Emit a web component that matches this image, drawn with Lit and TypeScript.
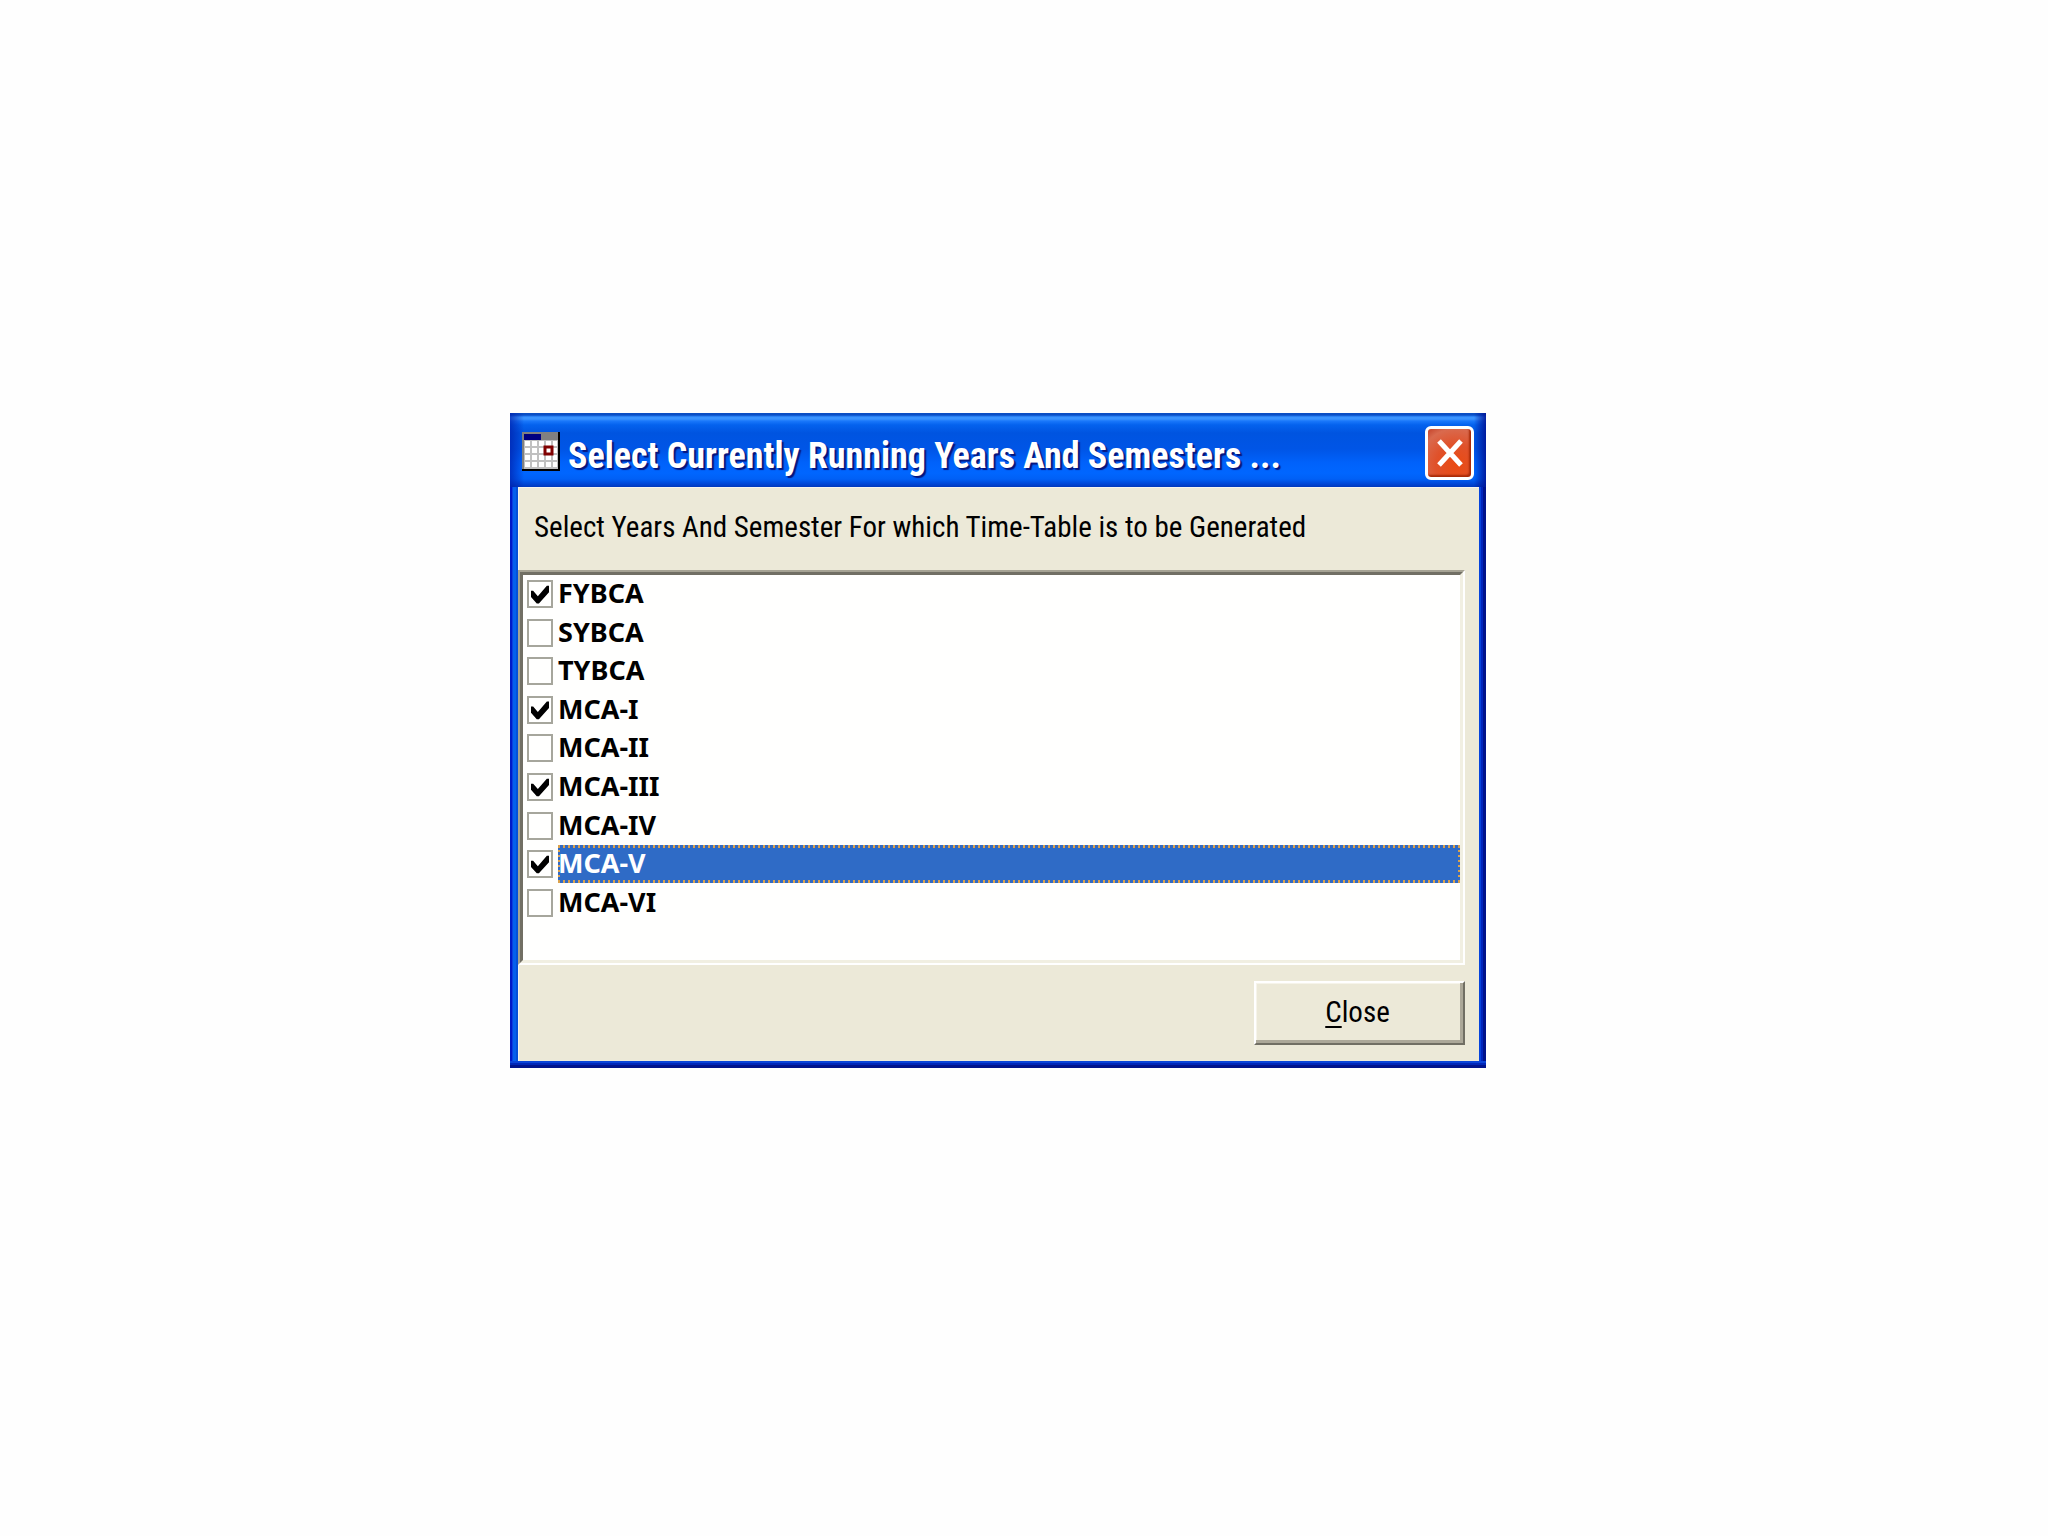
import { LitElement, html, svg, css } from "lit";
import { classMap } from "lit/directives/class-map.js";

interface Course {
  name: string;
  checked: boolean;
}

const columns = [3, 10, 17, 24, 31];
const rows = [9, 16, 23, 30];

class AppRoot extends LitElement {
  static properties = {
    courses: { state: true },
    selected: { state: true },
  };

  declare courses: Course[];
  declare selected: string;

  constructor() {
    super();
    const running = ["FYBCA", "MCA-I", "MCA-III", "MCA-V"];
    this.courses = [
      "FYBCA", "SYBCA", "TYBCA", "MCA-I", "MCA-II", "MCA-III", "MCA-IV", "MCA-V", "MCA-VI",
    ].map((name) => ({ name, checked: running.includes(name) }));
    this.selected = "MCA-V";
  }

  static styles = css`
    :host {
      display: flex;
      justify-content: center;
      align-items: center;
      box-sizing: border-box;
      min-height: 100vh;
      padding: 0 52px 55px 0;
      background: #fefefe;
      color: #000;
      font-family: "Roboto Condensed", "Liberation Sans", sans-serif;
      font-size: 29px;
      line-height: 32px;
    }
    .window {
      box-sizing: border-box;
      width: 976px;
      max-width: 100%;
      padding: 0 7px 7px 8px;
      background:
        linear-gradient(to top, #00138c 0 3px, #0026b8 3px 5px, #0a44d8 5px 7px, transparent 7px),
        linear-gradient(to right, #0019c8 0 2px, #0a3fe0 2px 3px, #0560ec 3px 6px, #0450d8 6px 8px, transparent 8px),
        linear-gradient(to left, #00138c 0 3px, #0024bc 3px 5px, #0644dc 5px 7px, transparent 7px),
        #0054e3;
    }
    .titlebar {
      display: flex;
      align-items: center;
      gap: 8px;
      box-sizing: border-box;
      height: 74px;
      margin: 0 -7px 0 -8px;
      padding: 2px 12px 0;
      background:
        linear-gradient(to right, rgba(0, 30, 170, 0.7), transparent 14px),
        linear-gradient(to left, rgba(0, 20, 150, 0.9), transparent 12px),
        linear-gradient(
          #0b4fc4 0 2px,
          #1c6fe8 3px,
          #3b94ff 4px 6px,
          #1a78fb 8px,
          #0462ee 12px,
          #0054e0 20px,
          #0055e6 36px,
          #0062fb 50px,
          #0066ff 60px,
          #0060f6 66px,
          #0046d6 71px,
          #0038bc 74px
        );
    }
    .icon {
      flex: none;
      width: 38px;
      height: 39px;
    }
    .title {
      flex: 1;
      margin: 0;
      padding-top: 10px;
      color: #fff;
      font-size: 36px;
      line-height: 40px;
      font-weight: bold;
      white-space: nowrap;
      text-shadow: 2px 2px 1px #06157c;
    }
    .dismiss {
      flex: none;
      display: grid;
      place-items: center;
      box-sizing: border-box;
      width: 49px;
      height: 54px;
      margin: 4px 0 0;
      padding: 0;
      border: 3px solid #fff;
      border-radius: 6px;
      background: radial-gradient(circle at 65% 75%, #ea4a12, #e0512a 45%, #d96a4e 80%, #c4432a);
      box-shadow: inset -2px -2px 2px #a82a08;
    }
    .dismiss svg {
      width: 28px;
      height: 30px;
    }
    .client {
      padding-right: 14px;
      background: #ece9d8;
      box-shadow: inset 1px 1px 0 #f6f4ee;
    }
    .caption {
      margin: 0;
      padding: 24px 0 27px 16px;
    }
    .frame {
      border: 2px solid;
      border-color: #a6a394 #fff #fff #a6a394;
    }
    .list {
      padding-bottom: 38px;
      border: 3px solid;
      border-color: #716f64 #f1efe2 #f1efe2 #716f64;
      background: #fffffe;
    }
    .items {
      display: grid;
      grid-template-rows: repeat(9, 1fr);
      height: 347px;
    }
    .row {
      display: flex;
      align-items: center;
      gap: 5px;
      padding-left: 4px;
      font-family: "Noto Sans", "Open Sans", sans-serif;
      font-size: 27px;
      font-weight: bold;
    }
    .box {
      flex: none;
      appearance: none;
      display: grid;
      place-items: center;
      box-sizing: border-box;
      width: 26px;
      height: 28px;
      margin: 0;
      border: 2px solid #a6a69c;
      background: #fffffe;
    }
    .box:checked::before {
      content: "";
      width: 18px;
      height: 20px;
      background: #000;
      clip-path: polygon(0 33%, 12% 33%, 38% 60%, 88% 8%, 100% 8%, 100% 40%, 44% 96%, 32% 96%, 0 64%);
    }
    .name {
      flex: 1;
      align-self: stretch;
      display: flex;
      align-items: center;
      padding-bottom: 2px;
    }
    .selected .name {
      color: #fff;
      background:
        repeating-linear-gradient(to right, #dba24c 0 2px, #316ac5 2px 5px) 0 0 / 100% 3px no-repeat,
        repeating-linear-gradient(to right, #dba24c 0 2px, #316ac5 2px 5px) 0 100% / 100% 3px no-repeat,
        repeating-linear-gradient(#dba24c 0 2px, #316ac5 2px 5px) 0 0 / 2px 100% no-repeat,
        repeating-linear-gradient(#dba24c 0 2px, #316ac5 2px 5px) 100% 0 / 2px 100% no-repeat,
        #2f6bc6;
    }
    .actions {
      display: flex;
      justify-content: flex-end;
      padding: 16px 0;
    }
    .close {
      box-sizing: border-box;
      width: 211px;
      height: 64px;
      padding: 0 4px 3px 0;
      border: 2px solid;
      border-color: #fff #716f64 #716f64 #fff;
      background: #ece9d8;
      box-shadow: inset -3px -3px 0 #aca899, inset 1px 1px 0 #f6f4ea;
      color: #000;
      font: inherit;
    }
    .close u {
      text-decoration-thickness: 2px;
      text-underline-offset: 4px;
      text-decoration-skip-ink: none;
    }
  `;

  private toggle(name: string) {
    this.selected = name;
    this.courses = this.courses.map((c) =>
      c.name === name ? { ...c, checked: !c.checked } : c
    );
  }

  private calendarIcon() {
    return html`<svg class="icon" viewBox="0 0 38 39" aria-hidden="true">
      <rect width="38" height="39" fill="#000" />
      <rect width="36" height="37" fill="#c0c0c0" />
      <rect width="36" height="8" fill="#808080" />
      <rect x="2" y="2" width="17" height="6" fill="#000080" />
      <rect width="2" height="37" fill="#808080" />
      ${rows.map((y) =>
        columns.map(
          (x) => svg`<rect x=${x} y=${y} width=${x === 31 ? 4 : 5} height="5" fill="#fff" />`
        )
      )}
      <rect x="23" y="15" width="7" height="7" fill="#fff" stroke="#800000" stroke-width="3" />
    </svg>`;
  }

  render() {
    return html`
      <section class="window" role="dialog" aria-labelledby="title">
        <header class="titlebar">
          ${this.calendarIcon()}
          <h1 class="title" id="title">Select Currently Running Years And Semesters ...</h1>
          <button class="dismiss" type="button" aria-label="Close window">
            <svg viewBox="0 0 28 30" aria-hidden="true">
              <path d="M3 3 L25 27 M25 3 L3 27" stroke="#fff" stroke-width="5" />
            </svg>
          </button>
        </header>
        <div class="client">
          <p class="caption">Select Years And Semester For which Time-Table is to be Generated</p>
          <div class="frame">
            <div class="list">
              <div class="items">
                ${this.courses.map(
                  (c) => html`<label
                    class=${classMap({ row: true, selected: c.name === this.selected })}
                  >
                    <input
                      class="box"
                      type="checkbox"
                      .checked=${c.checked}
                      @change=${() => this.toggle(c.name)}
                    />
                    <span class="name">${c.name}</span>
                  </label>`
                )}
              </div>
            </div>
          </div>
          <div class="actions">
            <button class="close" type="button"><u>C</u>lose</button>
          </div>
        </div>
      </section>
    `;
  }
}

customElements.define("app-root", AppRoot);
